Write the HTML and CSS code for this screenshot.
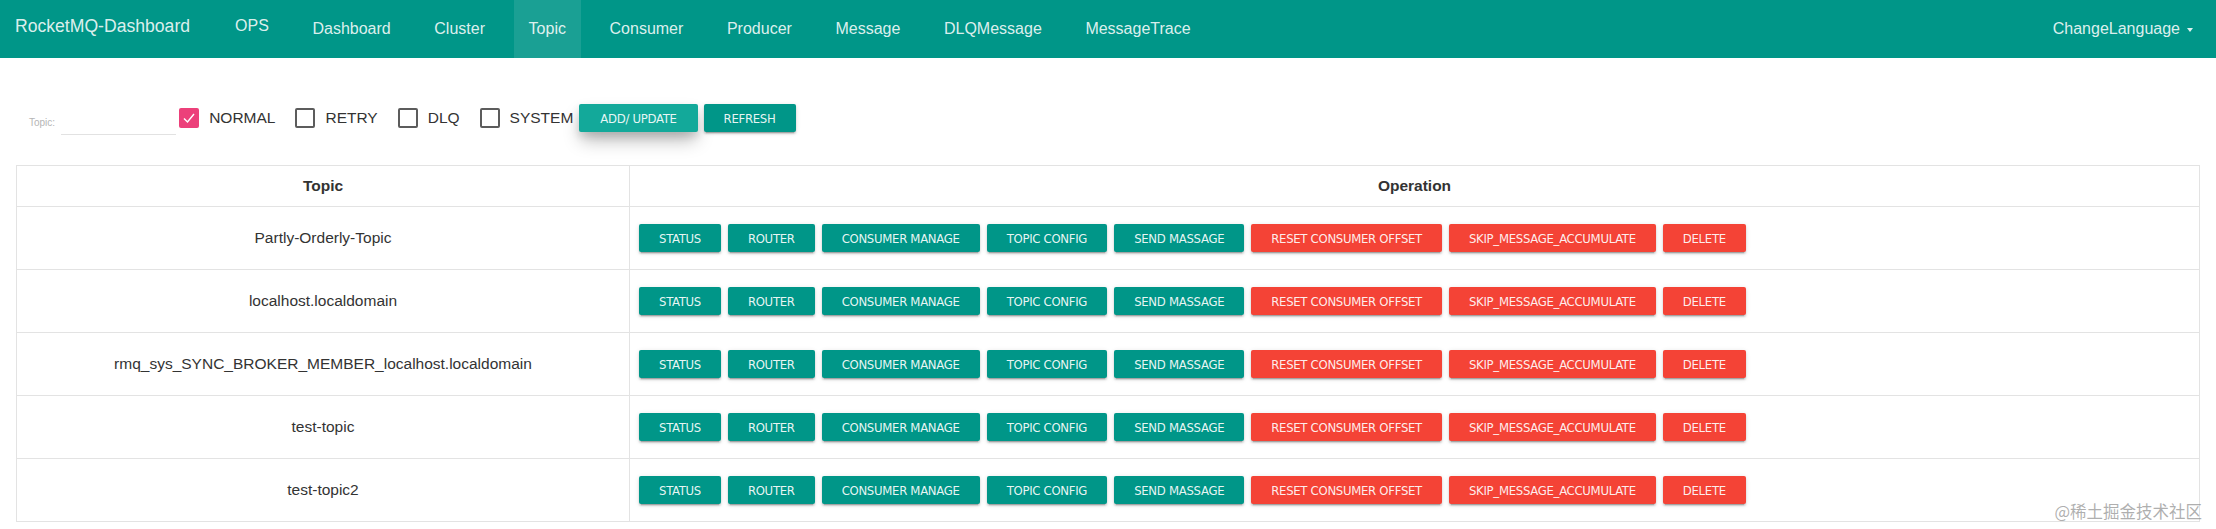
FILE: index.html
```html
<!DOCTYPE html>
<html lang="en">
<head>
<meta charset="utf-8">
<title>RocketMQ-Dashboard</title>
<link rel="stylesheet" href="styles.css">
</head>
<body>
<nav class="navbar">
  <a class="brand">RocketMQ-Dashboard</a>
  <ul class="nav">
    <li class="nav-item raised-item"><a>OPS</a></li>
    <li class="nav-item"><a>Dashboard</a></li>
    <li class="nav-item"><a>Cluster</a></li>
    <li class="nav-item active"><a>Topic</a></li>
    <li class="nav-item"><a>Consumer</a></li>
    <li class="nav-item"><a>Producer</a></li>
    <li class="nav-item"><a>Message</a></li>
    <li class="nav-item"><a>DLQMessage</a></li>
    <li class="nav-item"><a>MessageTrace</a></li>
  </ul>
  <div class="nav-right"><a>ChangeLanguage</a><span class="caret"></span></div>
</nav>

<main class="content">
  <div class="toolbar">
    <div class="topic-filter"><label>Topic:</label><span class="topic-input"></span></div>
    <label class="check checked"><span class="box"><svg viewBox="0 0 20 20" width="20" height="20"><path d="M5 10.5 L8.5 14 L15 6" fill="none" stroke="#fff" stroke-width="1.4"/></svg></span>NORMAL</label>
    <label class="check"><span class="box"></span>RETRY</label>
    <label class="check"><span class="box"></span>DLQ</label>
    <label class="check"><span class="box"></span>SYSTEM</label>
    <button class="btn btn-focus">ADD/ UPDATE</button>
    <button class="btn btn-refresh">REFRESH</button>
  </div>

  <table class="topic-table">
    <thead>
      <tr><th class="col-topic">Topic</th><th>Operation</th></tr>
    </thead>
    <tbody>
      <tr>
        <td class="col-topic">Partly-Orderly-Topic</td>
        <td class="ops"><div class="ops-row">
          <button class="btn">STATUS</button><button class="btn">ROUTER</button><button class="btn">CONSUMER MANAGE</button><button class="btn">TOPIC CONFIG</button><button class="btn">SEND MASSAGE</button><button class="btn btn-danger">RESET CONSUMER OFFSET</button><button class="btn btn-danger">SKIP_MESSAGE_ACCUMULATE</button><button class="btn btn-danger">DELETE</button>
        </div></td>
      </tr>
      <tr>
        <td class="col-topic">localhost.localdomain</td>
        <td class="ops"><div class="ops-row">
          <button class="btn">STATUS</button><button class="btn">ROUTER</button><button class="btn">CONSUMER MANAGE</button><button class="btn">TOPIC CONFIG</button><button class="btn">SEND MASSAGE</button><button class="btn btn-danger">RESET CONSUMER OFFSET</button><button class="btn btn-danger">SKIP_MESSAGE_ACCUMULATE</button><button class="btn btn-danger">DELETE</button>
        </div></td>
      </tr>
      <tr>
        <td class="col-topic">rmq_sys_SYNC_BROKER_MEMBER_localhost.localdomain</td>
        <td class="ops"><div class="ops-row">
          <button class="btn">STATUS</button><button class="btn">ROUTER</button><button class="btn">CONSUMER MANAGE</button><button class="btn">TOPIC CONFIG</button><button class="btn">SEND MASSAGE</button><button class="btn btn-danger">RESET CONSUMER OFFSET</button><button class="btn btn-danger">SKIP_MESSAGE_ACCUMULATE</button><button class="btn btn-danger">DELETE</button>
        </div></td>
      </tr>
      <tr>
        <td class="col-topic">test-topic</td>
        <td class="ops"><div class="ops-row">
          <button class="btn">STATUS</button><button class="btn">ROUTER</button><button class="btn">CONSUMER MANAGE</button><button class="btn">TOPIC CONFIG</button><button class="btn">SEND MASSAGE</button><button class="btn btn-danger">RESET CONSUMER OFFSET</button><button class="btn btn-danger">SKIP_MESSAGE_ACCUMULATE</button><button class="btn btn-danger">DELETE</button>
        </div></td>
      </tr>
      <tr>
        <td class="col-topic">test-topic2</td>
        <td class="ops"><div class="ops-row">
          <button class="btn">STATUS</button><button class="btn">ROUTER</button><button class="btn">CONSUMER MANAGE</button><button class="btn">TOPIC CONFIG</button><button class="btn">SEND MASSAGE</button><button class="btn btn-danger">RESET CONSUMER OFFSET</button><button class="btn btn-danger">SKIP_MESSAGE_ACCUMULATE</button><button class="btn btn-danger">DELETE</button>
        </div></td>
      </tr>
    </tbody>
  </table>
</main>

<div class="watermark">@稀土掘金技术社区</div>
</body>
</html>
```

FILE: styles.css
```css
html, body {
  margin: 0;
  padding: 0;
  background: #ffffff;
}
body {
  font-family: "Liberation Sans", Arial, sans-serif;
  color: #333333;
  position: relative;
  min-height: 529px;
}

/* ---------- navbar ---------- */
.navbar {
  display: flex;
  align-items: stretch;
  height: 58px;
  background: #009688;
  color: rgba(255, 255, 255, 0.87);
}
.brand {
  display: flex;
  align-items: center;
  padding: 0 15px 6px 15px;
  font-size: 17.6px;
}
.nav {
  display: flex;
  gap: 13.6px;
  list-style: none;
  margin: 0 0 0 15px;
  padding: 0;
}
.nav-item a {
  display: flex;
  align-items: center;
  height: 100%;
  box-sizing: border-box;
  padding: 0 15px;
  font-size: 16px;
}
.nav-item.raised-item a {
  padding-bottom: 6px;
}
.nav-item.active a {
  background: rgba(255, 255, 255, 0.1);
}
.nav-right {
  margin-left: auto;
  display: flex;
  align-items: center;
  padding-right: 23px;
  font-size: 16px;
}
.caret {
  display: block;
  width: 0;
  height: 0;
  margin-left: 7px;
  margin-top: 1px;
  border-top: 4px solid rgba(255, 255, 255, 0.87);
  border-left: 3.5px solid transparent;
  border-right: 3.5px solid transparent;
}

/* ---------- content ---------- */
.content {
  padding: 0 16px;
}
.toolbar {
  display: flex;
  align-items: flex-start;
  height: 28px;
  margin-top: 46px;
}
.topic-filter {
  display: flex;
  align-items: flex-end;
  height: 31px;
  margin-left: 13px;
}
.topic-filter label {
  font-size: 10px;
  line-height: 12px;
  color: #b5b5b5;
  margin-bottom: 6px;
  margin-right: 6px;
}
.topic-input {
  display: block;
  width: 115px;
  height: 100%;
  box-sizing: border-box;
  border-bottom: 1px solid #e2e2e2;
}
.check {
  display: flex;
  align-items: center;
  height: 28px;
  font-size: 15.5px;
  color: #333;
  margin-left: 20px;
}
.topic-filter + .check {
  margin-left: 3px;
}
.check .box {
  display: block;
  width: 20px;
  height: 20px;
  box-sizing: border-box;
  border: 2px solid #5c5c5c;
  border-radius: 2px;
  margin-right: 10px;
}
.check.checked .box {
  border: none;
  background: #ec407a;
}
.check .box svg {
  display: block;
}

/* ---------- buttons ---------- */
.btn {
  height: 28px;
  padding: 0 20px;
  border: 0;
  border-radius: 2px;
  background: #009688;
  color: rgba(255, 255, 255, 0.92);
  font-family: "DejaVu Sans Condensed", "DejaVu Sans", sans-serif;
  font-stretch: condensed;
  font-size: 13px;
  letter-spacing: -0.3px;
  text-transform: uppercase;
  white-space: nowrap;
  box-shadow: 0 2px 2px 0 rgba(0, 0, 0, 0.14), 0 3px 1px -2px rgba(0, 0, 0, 0.2), 0 1px 5px 0 rgba(0, 0, 0, 0.12);
  cursor: pointer;
}
.btn-focus {
  margin-left: 6px;
  padding: 0 21px;
  background: #13a99a;
  box-shadow: 0 10px 18px -2px rgba(0, 0, 0, 0.28), 0 4px 8px rgba(0, 0, 0, 0.12);
}
.btn-refresh {
  margin-left: 6px;
}
.btn-danger {
  background: #f44336;
}

/* ---------- table ---------- */
.topic-table {
  width: 100%;
  margin-top: 33px;
  border-collapse: collapse;
  font-size: 15.5px;
  color: #333;
}
.topic-table th,
.topic-table td {
  border: 1px solid #e3e3e3;
}
.topic-table th {
  height: 40px;
  font-size: 15.5px;
  font-weight: bold;
  text-align: center;
  padding: 0;
}
.topic-table td {
  height: 62px;
  padding: 0;
}
.col-topic {
  width: 612px;
  text-align: center;
}
.topic-table td.ops {
  padding-left: 9px;
}
.ops-row {
  display: flex;
  gap: 7px;
}

/* ---------- watermark ---------- */
.watermark {
  position: absolute;
  right: 14px;
  bottom: 6px;
  font-family: "Noto Sans CJK SC", sans-serif;
  font-size: 16.5px;
  color: rgba(140, 140, 140, 0.7);
}
```
